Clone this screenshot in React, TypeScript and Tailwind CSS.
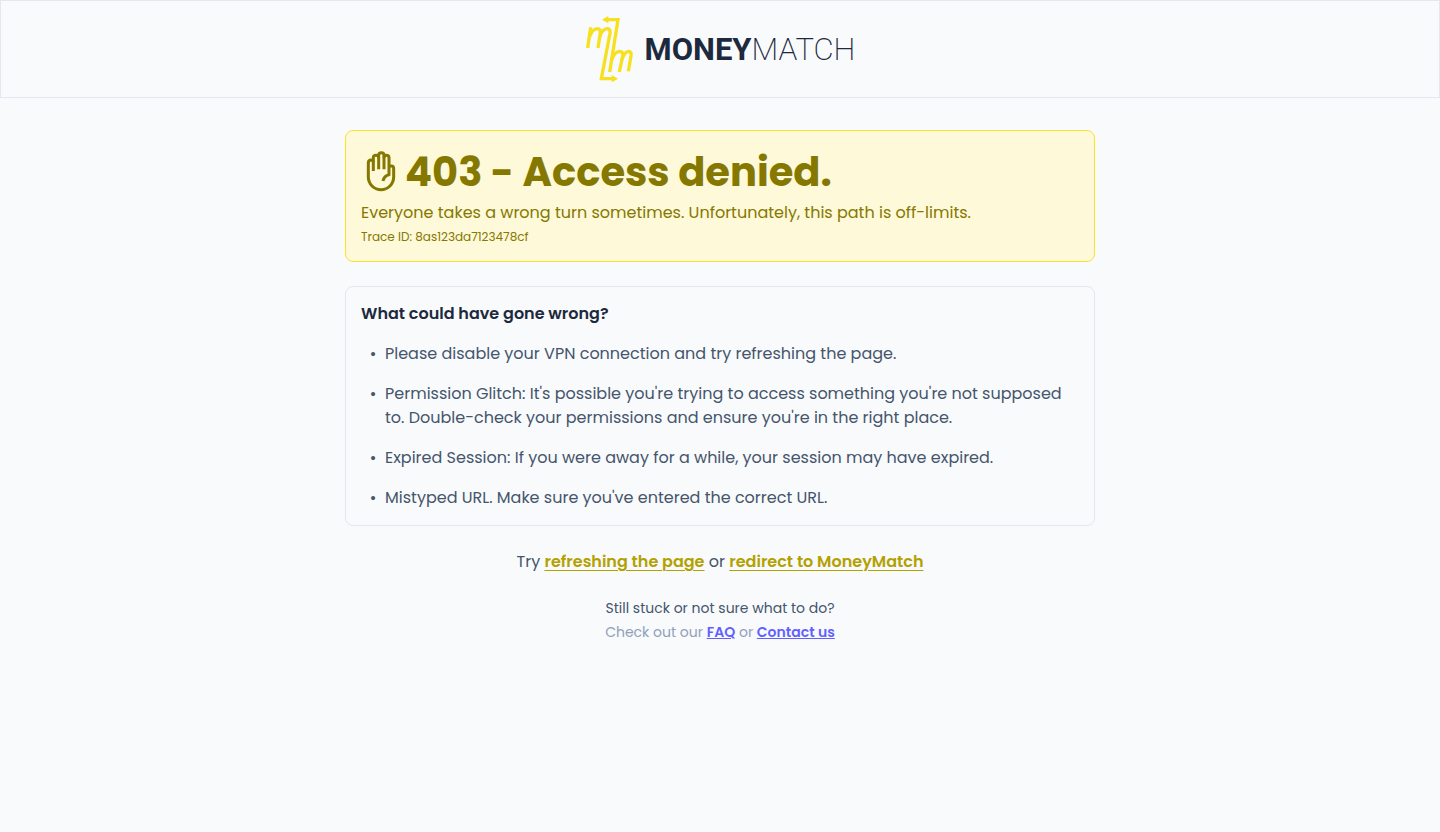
const reasons = [
  "Please disable your VPN connection and try refreshing the page.",
  "Permission Glitch: It's possible you're trying to access something you're not supposed to. Double-check your permissions and ensure you're in the right place.",
  "Expired Session: If you were away for a while, your session may have expired.",
  "Mistyped URL. Make sure you've entered the correct URL.",
];

function Logo() {
  return (
    <a href="#" className="flex items-center gap-3">
      <svg width="48" height="66" viewBox="20 18 144 198" fill="none" stroke="#f7e01f" strokeWidth="10" aria-hidden="true">
        {/* left m, its last leg runs down into the lower arrow */}
        <path d="M28 114L37 52" />
        <path d="M34 80Q42 57 57 56Q68 56 66 70L59 114" />
        <path d="M64 80Q72 57 87 56Q97 56 95 70L69 206H102" />
        <path d="M100 195L119 206L100 217Z" fill="#f7e01f" stroke="none" />
        {/* right m, its first leg runs up into the upper arrow */}
        <path d="M94 186L119 29H88" />
        <path d="M90 18L71 29L90 40Z" fill="#f7e01f" stroke="none" />
        <path d="M101 148Q109 125 124 124Q135 124 133 138L123 186" />
        <path d="M131 148Q139 125 151 124Q160 124 158 138L150 184" />
      </svg>
      <span className="pt-0.5 font-['Roboto',sans-serif] text-[31px] leading-10 text-slate-800">
        <span className="font-bold">MONEY</span>
        <span className="font-extralight">MATCH</span>
      </span>
    </a>
  );
}

function HandIcon() {
  return (
    <svg
      width="40"
      height="48"
      viewBox="63 69 120 144"
      fill="none"
      stroke="currentColor"
      strokeWidth="9"
      strokeLinejoin="round"
      aria-hidden="true"
    >
      <path d="M100 138V112Q100 105 93 105Q85 105 85 114V156A38 38 0 0 0 161 156V131Q161 123 154 123H147" />
      <path d="M100 112V98Q100 91 108 91Q116 91 116 98V133" />
      <path d="M116 98V91Q116 83 124 83Q132 83 132 91V133" />
      <path d="M132 98Q132 91 139 91Q147 91 147 98V149Q132 152 129 168" />
    </svg>
  );
}

export default function App() {
  return (
    <div className="min-h-screen bg-slate-50 font-['Poppins','Inter',sans-serif] text-slate-600 antialiased">
      <header className="flex justify-center border border-slate-200 p-[15px]">
        <Logo />
      </header>

      <main className="mx-auto flex max-w-[782px] flex-col gap-6 px-4 py-8">
        <section className="rounded-lg border border-[#f7e52b] bg-[#fef9d8] p-[15px] text-[#857800]">
          <h1 className="flex items-center text-[40px] leading-[52px] font-bold">
            <HandIcon />
            <span className="ml-1">403 - Access denied.</span>
          </h1>
          <p className="mt-[3px] leading-6">
            Everyone takes a wrong turn sometimes. Unfortunately, this path is off-limits.
          </p>
          <p className="mt-[3px] text-xs leading-[18px]">Trace ID: 8as123da7123478cf</p>
        </section>

        <section className="rounded-lg border border-slate-200 p-[15px]">
          <h2 className="font-semibold text-slate-800">What could have gone wrong?</h2>
          <ul className="mt-4 flex flex-col gap-4">
            {reasons.map((reason) => (
              <li key={reason} className="flex leading-6">
                <span className="w-6 shrink-0 text-center">•</span>
                <span>{reason}</span>
              </li>
            ))}
          </ul>
        </section>

        <footer className="flex flex-col gap-[22px] text-center leading-6">
          <p>
            Try{" "}
            <a href="#" className="font-semibold text-[#b3a100] underline decoration-1 underline-offset-3">refreshing the page</a> or{" "}
            <a href="#" className="font-semibold text-[#b3a100] underline decoration-1 underline-offset-3">redirect to MoneyMatch</a>
          </p>
          <div className="text-sm leading-6">
            <p>Still stuck or not sure what to do?</p>
            <p className="text-slate-400">
              Check out our{" "}
              <a href="#" className="font-semibold text-indigo-500 underline decoration-1">FAQ</a> or{" "}
              <a href="#" className="font-semibold text-indigo-500 underline decoration-1">Contact us</a>
            </p>
          </div>
        </footer>
      </main>
    </div>
  );
}
